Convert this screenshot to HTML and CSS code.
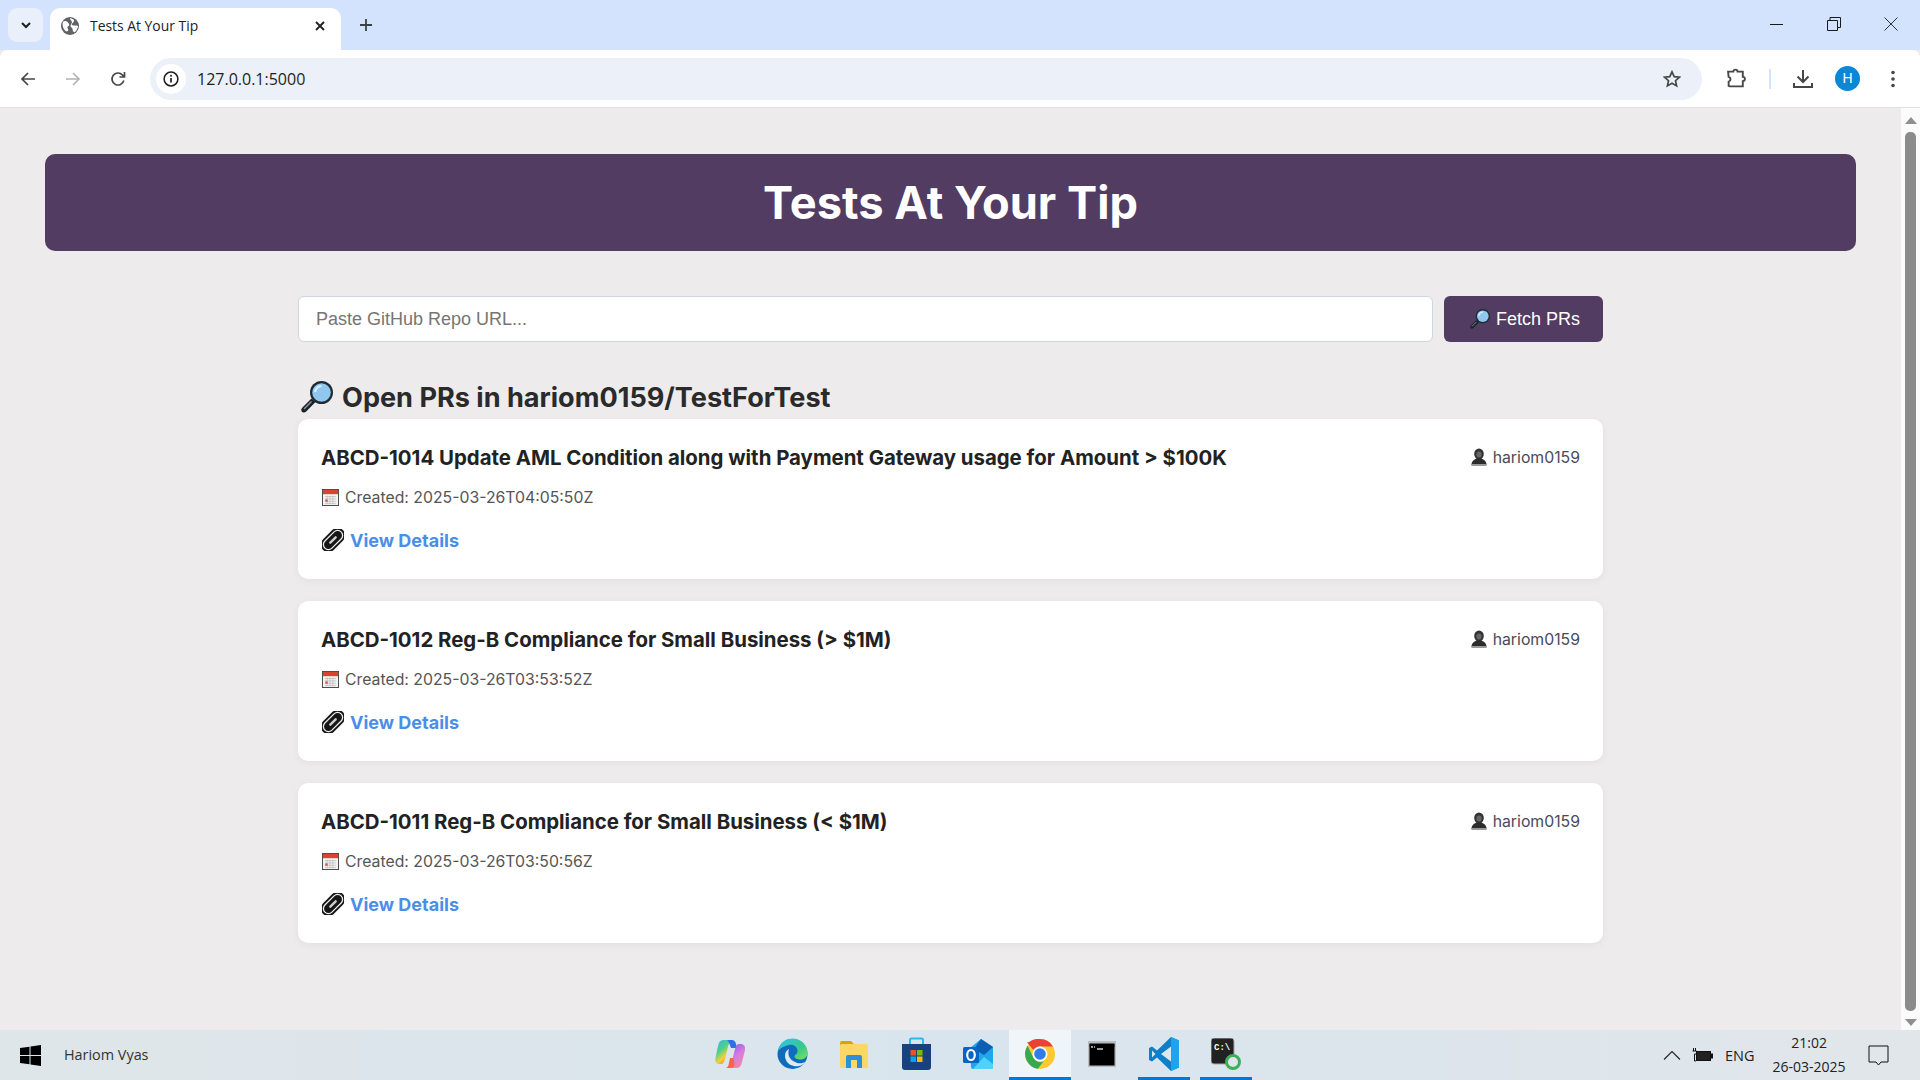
FILE: index.html
```html
<!DOCTYPE html>
<html lang="en">
<head>
    <meta charset="UTF-8">
    <meta name="viewport" content="width=device-width, initial-scale=1.0">
    <title>Tests At Your Tip</title>
    <link rel="stylesheet" href="styles.css">
</head>
<body>
    <svg class="defs" width="0" height="0" aria-hidden="true">
        <defs>
            <g id="e-search">
                <path d="M10.500 17.500 1.200 26.800c-1.700 1.800-.8 3.800.6 4.400 1 .5 2.400.3 3.400-.8l9.300-9.400z" fill="#1a2228"/>
                <path d="M3 28 10.500 20.500" stroke="#8a97a1" stroke-width="1.400" fill="none"/>
                <circle cx="20.500" cy="11.500" r="11.500" fill="#1f2b33"/>
                <circle cx="20.500" cy="11.500" r="9.300" fill="#8fc7ee"/>
                <path d="M14 11a7 7 0 0 1 6.500-6" stroke="#dcf0fc" stroke-width="2.200" fill="none"/>
            </g>
            <g id="e-cal">
                <rect x="0.500" y="0.500" width="17" height="17" fill="#f4f4f4" stroke="#444"/>
                <rect x="1" y="1" width="16" height="4.500" fill="#d9432f"/>
                <path d="M3 8h12M3 10.500h12M3 13h12M3 15.500h12M5.500 7v9M8.500 7v9M11.500 7v9" stroke="#bdbdbd" stroke-width=".8"/>
                <rect x="3.500" y="11" width="2.500" height="2.500" fill="#e0553f"/>
            </g>
            <g id="e-link">
                <g transform="rotate(-45 11 11)">
                    <rect x="-3" y="3.500" width="28" height="15" rx="7.500" fill="#161616"/>
                    <rect x="-.5" y="6" width="23" height="10" rx="5" fill="none" stroke="#ededed" stroke-width="1.300"/>
                    <rect x="6" y="9.800" width="10" height="2.400" rx="1.200" fill="#cfcfcf"/>
                </g>
            </g>
            <g id="e-user">
                <ellipse cx="8" cy="6" rx="4.800" ry="5.500" fill="#333"/>
                <path d="M.5 17c0-4 2.500-5.500 5-6.500h5c2.500 1 5 2.500 5 6.500z" fill="#2c2c2c"/>
                <ellipse cx="8" cy="6.500" rx="2.600" ry="3" fill="#666"/>
                <rect x=".5" y="16" width="15" height="2" fill="#9a9a9a"/>
            </g>
        </defs>
    </svg>

    <div class="tabstrip">
        <button class="tab-list">
            <svg width="12" height="8" viewBox="0 0 12 8"><path d="M2 2l4 4 4-4" fill="none" stroke="#1f1f1f" stroke-width="2"/></svg>
        </button>
        <div class="tab">
            <svg class="favicon" width="18" height="18" viewBox="0 0 18 18">
                <circle cx="9" cy="9" r="9" fill="#5f6368"/>
                <path d="M2 4.500C4 3.500 6 4 7 5.500S9 8 7.500 9 6 10.500 7 12s-.5 2.500-1.500 2.500S2.500 12 2 10 1.500 6 2 4.500zM9.500 1c1 1 3 1 3.500 2S12 6 11 6.500s0 2 1.500 2 4 0 4.500.5-1.500 5-3 6-2.500-1.500-2.500-3-2-1.500-2-3 1.500-3 1.500-4S8 2 9.500 1z" fill="#fff"/>
            </svg>
            <span class="tab-title">Tests At Your Tip</span>
            <svg class="tab-close" width="10" height="10" viewBox="0 0 10 10"><path d="M1 1l8 8M9 1L1 9" stroke="#1f1f1f" stroke-width="1.800"/></svg>
        </div>
        <svg class="new-tab" width="14" height="14" viewBox="0 0 14 14"><path d="M7 1v12M1 7h12" stroke="#3c4043" stroke-width="1.800"/></svg>
        <div class="win-btns">
            <svg width="14" height="14" viewBox="0 0 14 14"><path d="M0 7.500h13" stroke="#1a1a1a" stroke-width="1"/></svg>
            <svg width="14" height="14" viewBox="0 0 14 14"><path d="M.5 3.500h10v10H.5zM3 3.500V.5h10.500v10h-3" fill="none" stroke="#1a1a1a" stroke-width="1"/></svg>
            <svg width="14" height="14" viewBox="0 0 14 14"><path d="M.5.500l13 13M13.500.500l-13 13" stroke="#333" stroke-width="1"/></svg>
        </div>
    </div>

    <div class="toolbar">
        <div class="nav-btns">
            <svg width="16" height="16" viewBox="0 0 16 16"><path d="M15 8H2M8 2L2 8l6 6" fill="none" stroke="#474747" stroke-width="1.700"/></svg>
            <svg width="16" height="16" viewBox="0 0 16 16"><path d="M1 8h13M8 2l6 6-6 6" fill="none" stroke="#b3b3b3" stroke-width="1.700"/></svg>
            <svg width="16" height="16" viewBox="0 0 16 16"><path d="M13.800 9.500A6 6 0 1 1 12.300 3.800L14 5.500M14.500 1v5h-5" fill="none" stroke="#474747" stroke-width="1.700"/></svg>
        </div>
        <div class="omnibox">
            <span class="site-info">
                <svg width="16" height="16" viewBox="0 0 16 16"><circle cx="8" cy="8" r="6.900" fill="none" stroke="#1f1f1f" stroke-width="1.500"/><path d="M8 7v4.500" stroke="#1f1f1f" stroke-width="1.700"/><circle cx="8" cy="4.800" r="1" fill="#1f1f1f"/></svg>
            </span>
            <span class="url">127.0.0.1:5000</span>
            <svg class="star" width="18" height="18" viewBox="0 0 18 18"><path d="M9 1.800l2.200 4.800 5.200.6-3.900 3.500 1.100 5.200L9 13.300l-4.600 2.600 1.100-5.200L1.600 7.200l5.200-.6z" fill="none" stroke="#474747" stroke-width="1.700"/></svg>
        </div>
        <div class="tool-btns">
            <svg class="t-ext" width="21" height="21" viewBox="0 0 20 20"><path d="M2 3.500h5a2 2 0 0 1 4 0h5v5a2 2 0 0 1 0 4v5H3.500l-1-.5v-4a2.300 2.300 0 0 0 0-4.500z" fill="none" stroke="#474747" stroke-width="1.800"/></svg>
            <span class="t-sep"></span>
            <svg class="t-dl" width="20" height="20" viewBox="0 0 20 20"><path d="M10 1v11M4.500 7.500l5.500 5.500 5.500-5.500M1 14v4h18v-4" fill="none" stroke="#474747" stroke-width="2"/></svg>
            <span class="avatar">H</span>
            <svg class="t-menu" width="4" height="18" viewBox="0 0 4 18"><circle cx="2" cy="2.500" r="1.800" fill="#474747"/><circle cx="2" cy="9" r="1.800" fill="#474747"/><circle cx="2" cy="15.500" r="1.800" fill="#474747"/></svg>
        </div>
    </div>

    <div class="viewport">
        <div class="page">
            <header class="banner">
                <h1>Tests At Your Tip</h1>
            </header>
            <main class="content">
                <form class="repo-form">
                    <input class="repo-input" type="text" placeholder="Paste GitHub Repo URL...">
                    <button class="fetch-btn" type="button"><svg width="20" height="20" viewBox="0 0 32 32"><use href="#e-search"/></svg> Fetch PRs</button>
                </form>
                <h2 class="list-title"><svg width="32" height="32" viewBox="0 0 32 32"><use href="#e-search"/></svg> Open PRs in hariom0159/TestForTest</h2>

                <div class="pr-card">
                    <div class="pr-top">
                        <h3>ABCD-1014 Update AML Condition along with Payment Gateway usage for Amount &gt; $100K</h3>
                        <span class="pr-author"><svg width="16" height="18" viewBox="0 0 16 18"><use href="#e-user"/></svg> hariom0159</span>
                    </div>
                    <p class="pr-date"><svg width="17" height="17" viewBox="0 0 18 18"><use href="#e-cal"/></svg> Created: 2025-03-26T04:05:50Z</p>
                    <p class="pr-link"><svg width="22" height="22" viewBox="0 0 22 22"><use href="#e-link"/></svg> <a href="#">View Details</a></p>
                </div>

                <div class="pr-card">
                    <div class="pr-top">
                        <h3>ABCD-1012 Reg-B Compliance for Small Business (&gt; $1M)</h3>
                        <span class="pr-author"><svg width="16" height="18" viewBox="0 0 16 18"><use href="#e-user"/></svg> hariom0159</span>
                    </div>
                    <p class="pr-date"><svg width="17" height="17" viewBox="0 0 18 18"><use href="#e-cal"/></svg> Created: 2025-03-26T03:53:52Z</p>
                    <p class="pr-link"><svg width="22" height="22" viewBox="0 0 22 22"><use href="#e-link"/></svg> <a href="#">View Details</a></p>
                </div>

                <div class="pr-card">
                    <div class="pr-top">
                        <h3>ABCD-1011 Reg-B Compliance for Small Business (&lt; $1M)</h3>
                        <span class="pr-author"><svg width="16" height="18" viewBox="0 0 16 18"><use href="#e-user"/></svg> hariom0159</span>
                    </div>
                    <p class="pr-date"><svg width="17" height="17" viewBox="0 0 18 18"><use href="#e-cal"/></svg> Created: 2025-03-26T03:50:56Z</p>
                    <p class="pr-link"><svg width="22" height="22" viewBox="0 0 22 22"><use href="#e-link"/></svg> <a href="#">View Details</a></p>
                </div>
            </main>
        </div>
        <div class="scrollbar">
            <span class="arrow-up"></span>
            <span class="thumb"></span>
            <span class="arrow-down"></span>
        </div>
    </div>

    <div class="taskbar">
        <div class="task-left">
            <svg class="win-logo" width="21" height="21" viewBox="0 0 21 21"><path d="M0 3l9.500-1.300V10H0zM10.500 1.500 21 0v10H10.500zM0 11h9.500v8.300L0 18zM10.500 11H21v10l-10.500-1.500z" fill="#000"/></svg>
            <span class="user-name">Hariom Vyas</span>
        </div>
        <div class="task-apps">
            <span class="app">
                <svg width="30" height="30" viewBox="0 0 30 30">
                    <defs>
                        <linearGradient id="cp1" x1="0" y1="0" x2=".6" y2="1"><stop offset="0" stop-color="#35b6e8"/><stop offset=".45" stop-color="#4fd08a"/><stop offset=".75" stop-color="#f3d23a"/><stop offset="1" stop-color="#f4803c"/></linearGradient>
                        <linearGradient id="cp2" x1=".2" y1="0" x2=".8" y2="1"><stop offset="0" stop-color="#8a5cf0"/><stop offset=".5" stop-color="#d77be0"/><stop offset="1" stop-color="#f58ba0"/></linearGradient>
                    </defs>
                    <path d="M8 1h9c-2 1-3 3-4 7l-3 12c-.8 3-2 5-4 5H4c-3 0-4-2.500-3.500-6L3 7c.7-4 2.500-6 5-6z" fill="url(#cp1)"/>
                    <path d="M14 1h3c2 0 3.500 1.500 4 4l1 4h-6l-1.500-4C14 3 13 1.800 12 1.500z" fill="#2f6fe8"/>
                    <path d="M22 29h-9c2-1 3-3 4-7l3-12c.8-3 2-5 4-5h2c3 0 4.500 2.500 4 6l-3 12c-.7 4-2.500 6-5 6z" fill="url(#cp2)"/>
                    <path d="M9 19l6 0-1 5c-.5 3-1.500 4.500-3 5H16c1.500 0 3-1 3.500-3l-1-7z" fill="#f4654c"/>
                </svg>
            </span>
            <span class="app">
                <svg width="31" height="34" viewBox="0 0 31 34">
                    <defs><linearGradient id="ed1" x1="0" y1="0" x2="1" y2="1"><stop offset="0" stop-color="#35c1f1"/><stop offset=".6" stop-color="#36c98d"/><stop offset="1" stop-color="#7fe05c"/></linearGradient></defs>
                    <circle cx="15.500" cy="17" r="15" fill="#0f6cbd"/>
                    <path d="M1 14C3 5 9 1.500 15.500 1.500 24 1.500 30.500 8 30.500 16c0 4-3 6.500-7 6.500-3 0-6-1-6-3 0-2 3-2 3-5.500 0-4-4-7-8.500-6C7 9 3 11 1 14z" fill="url(#ed1)"/>
                    <path d="M12 12c-4 2-5 7-3 11 2 5 8 7 13 6 3-.5 5-2 6-4-3 1.500-7 2-10 0-5-2-8-7-6-13z" fill="#dcebf3"/>
                </svg>
            </span>
            <span class="app">
                <svg width="28" height="28" viewBox="0 0 28 28">
                    <path d="M0 3a2 2 0 0 1 2-2h9l3 3v5H0z" fill="#e0a100"/>
                    <rect x="0" y="4" width="28" height="24" rx="2" fill="#fcd768"/>
                    <path d="M6 28V17a2 2 0 0 1 2-2h12a2 2 0 0 1 2 2v11h-5v-8h-6v8z" fill="#2f8fd8"/>
                </svg>
            </span>
            <span class="app">
                <svg width="29" height="33" viewBox="0 0 29 33">
                    <path d="M8 8V3a1.500 1.500 0 0 1 1.500-1.500h10A1.500 1.500 0 0 1 21 3v5" fill="none" stroke="#2fb7ea" stroke-width="2"/>
                    <path d="M0 7h29v23a3 3 0 0 1-3 3H3a3 3 0 0 1-3-3z" fill="#17427c"/>
                    <rect x="8.500" y="13" width="5.500" height="5.500" fill="#f25022"/>
                    <rect x="15" y="13" width="5.500" height="5.500" fill="#7fba00"/>
                    <rect x="8.500" y="19.500" width="5.500" height="5.500" fill="#00a4ef"/>
                    <rect x="15" y="19.500" width="5.500" height="5.500" fill="#ffb900"/>
                </svg>
            </span>
            <span class="app">
                <svg width="30" height="30" viewBox="0 0 30 30">
                    <path d="M7 9l11-9 12 8v20a2 2 0 0 1-2 2H10a2 2 0 0 1-2-2z" fill="#1ea7ea"/>
                    <path d="M18 0l12 8-9 8-10-6z" fill="#0a5fb4"/>
                    <path d="M10 30l11-12 9 7v3a2 2 0 0 1-2 2z" fill="#4fd4f7"/>
                    <rect x="0" y="8" width="16" height="16" rx="1.500" fill="#0a64c4"/>
                    <ellipse cx="8" cy="16" rx="3.800" ry="5" fill="none" stroke="#fff" stroke-width="2.200"/>
                </svg>
            </span>
            <span class="app app-active">
                <svg width="30" height="30" viewBox="0 0 30 30">
                    <circle cx="15" cy="15" r="15" fill="#fcc934"/>
                    <path d="M15 0a15 15 0 0 1 13 7.500H15A7.500 7.500 0 0 0 8.500 11L2 3.500 4 3A15 15 0 0 1 15 0z" fill="#ea4335"/>
                    <path d="M2.500 6.800A15 15 0 0 0 12.800 29.800l6-7.500A7.500 7.500 0 0 1 8.500 18.700z" fill="#34a853"/>
                    <circle cx="15" cy="15" r="7.500" fill="#fff"/>
                    <circle cx="15" cy="15" r="5.800" fill="#2f7de8"/>
                </svg>
            </span>
            <span class="app">
                <svg width="28" height="26" viewBox="0 0 28 26">
                    <rect width="28" height="26" fill="#b9bdc0"/>
                    <rect x="1.500" y="2" width="25" height="4" fill="#5a5a5a"/>
                    <rect x="1.500" y="3" width="25" height="21.500" fill="#000"/>
                    <path d="M3 6h2M6 6h1M9 8h6" stroke="#ccc" stroke-width="1.500"/>
                </svg>
            </span>
            <span class="app">
                <svg width="30" height="34" viewBox="0 0 30 34">
                    <path d="M22 0l8 3.500v27L22 34 8 20.500 3 24.500 0 23V11l3-1.500 5 4z" fill="#0e7fc9"/>
                    <path d="M22 0l8 3.500v27L22 34z" fill="#1fa3ee"/>
                    <path d="M22 9.500 12 17l10 7.500z" fill="#dce8ee"/>
                    <path d="M3 13.500v7l3.500-3.500z" fill="#dce8ee"/>
                </svg>
            </span>
            <span class="app">
                <svg width="30" height="32" viewBox="0 0 30 32">
                    <rect width="23" height="26" rx="3" fill="#222" stroke="#aaa"/>
                    <text x="3" y="12" class="cmd-label">C:\</text>
                    <circle cx="22" cy="24" r="6.500" fill="#dfe6ea" stroke="#3fae5a" stroke-width="3"/>
                </svg>
            </span>
        </div>
        <div class="task-tray">
            <svg width="18" height="10" viewBox="0 0 18 10"><path d="M1 9.500l8-8 8 8" fill="none" stroke="#222" stroke-width="1.100"/></svg>
            <svg class="battery" width="21" height="14" viewBox="0 0 21 14"><path d="M1.500 0v3M3.500 0v3M.5 3h4v3H2.500v7H4" fill="none" stroke="#111"/><rect x="4.500" y="3.500" width="14" height="9" fill="#222" stroke="#111"/><rect x="19" y="5.500" width="2" height="5" fill="#111"/></svg>
            <span class="lang">ENG</span>
            <div class="clock"><span>21:02</span><span>26-03-2025</span></div>
            <svg class="notif" width="21" height="21" viewBox="0 0 21 21"><path d="M1 1h19v16h-7l-2.500 3L8 17H1z" fill="none" stroke="#111" stroke-width="1"/></svg>
        </div>
    </div>
</body>
</html>
```

FILE: styles.css
```css
* {
    box-sizing: border-box;
}
html, body {
    margin: 0;
    height: 100%;
    overflow: hidden;
}
body {
    display: flex;
    flex-direction: column;
    height: 1080px;
    font-family: "Inter", "Liberation Sans", sans-serif;
    background: #edebec;
}
.defs {
    display: block;
    height: 0;
}

/* browser chrome */
.tabstrip {
    height: 50px;
    flex: none;
    background: #d3e3fd;
    display: flex;
    align-items: flex-start;
    padding: 8px 0 0 8px;
}
.tab-list {
    width: 35px;
    height: 34px;
    border: 0;
    border-radius: 9px;
    background: #e9f0fc;
    display: flex;
    align-items: center;
    justify-content: center;
    padding: 0;
}
.tab {
    width: 291px;
    height: 42px;
    margin-left: 7px;
    background: #fff;
    border-radius: 10px 10px 0 0;
    display: flex;
    align-items: center;
    padding: 0 16px 7px 11px;
}
.favicon {
    flex: none;
}
.tab-title {
    margin-left: 11px;
    font: 13.900px "Open Sans", sans-serif;
    color: #222;
    flex: 1;
}
.new-tab {
    margin: 10px 0 0 18px;
}
.win-btns {
    margin-left: auto;
    display: flex;
    gap: 43px;
    padding: 10px 22px 0 0;
    margin-top: -1px;
}
.toolbar {
    height: 58px;
    flex: none;
    background: #fff;
    border-bottom: 1px solid #dfdfdf;
    border-radius: 8px 8px 0 0;
    display: flex;
    align-items: center;
}
.nav-btns {
    display: flex;
    gap: 29px;
    width: 150px;
    padding-left: 20px;
}
.omnibox {
    width: 1552px;
    height: 42px;
    border-radius: 21px;
    background: #ebf0f9;
    display: flex;
    align-items: center;
    padding: 0 21px 0 6px;
}
.site-info {
    width: 30px;
    height: 30px;
    border-radius: 50%;
    background: #fff;
    display: flex;
    align-items: center;
    justify-content: center;
}
.url {
    margin-left: 11px;
    font: 16px "Open Sans", sans-serif;
    color: #1f1f1f;
}
.star {
    margin-left: auto;
}
.tool-btns {
    flex: 1;
    display: flex;
    align-items: center;
    padding-left: 24px;
}
.t-sep {
    width: 2px;
    height: 20px;
    background: #d3e3fd;
    margin-left: 22px;
}
.t-dl {
    margin-left: 22px;
}
.avatar {
    width: 25px;
    height: 25px;
    border-radius: 50%;
    background: #0b87d6;
    color: #fff;
    font: 14px/25px "Liberation Sans", sans-serif;
    text-align: center;
    margin-left: 22px;
}
.t-menu {
    margin-left: 31px;
}

/* page */
.viewport {
    height: 922px;
    flex: none;
    display: flex;
}
.page {
    flex: 1;
    padding: 46px 45px 0;
    background: #edebec;
    color: #222;
}
.scrollbar {
    width: 19px;
    background: #fbfbfb;
    display: flex;
    flex-direction: column;
    align-items: center;
    padding: 9px 0 4px;
}
.arrow-up {
    width: 0;
    height: 0;
    border: 6.500px solid transparent;
    border-top: 0;
    border-bottom: 7px solid #8f8f8f;
}
.thumb {
    width: 11px;
    flex: 1;
    background: #8b8b8b;
    border-radius: 5px;
    margin: 8px 0;
}
.arrow-down {
    width: 0;
    height: 0;
    border: 6.500px solid transparent;
    border-bottom: 0;
    border-top: 7px solid #8f8f8f;
}
.banner {
    height: 97px;
    background: #523c62;
    border-radius: 10px;
    display: flex;
    align-items: center;
    justify-content: center;
}
.banner h1 {
    margin: 0;
    font-size: 45.200px;
    font-weight: 700;
    color: #fff;
}
.content {
    width: 1305px;
    margin: 45px auto 0;
}
.repo-form {
    display: flex;
    gap: 11px;
}
.repo-input {
    flex: 1;
    height: 46px;
    border: 1px solid #ccd6e2;
    border-radius: 6px;
    background: #fff;
    padding: 0 17px;
    font: 18px "Liberation Sans", sans-serif;
}
.repo-input::placeholder {
    color: #757575;
}
.fetch-btn {
    width: 159px;
    height: 46px;
    border: 0;
    border-radius: 6px;
    background: #523c62;
    color: #fff;
    font: 18px "Liberation Sans", sans-serif;
    display: flex;
    align-items: center;
    justify-content: center;
    gap: 6px;
    padding: 0 0 0 3px;
}
.list-title {
    margin: 39px 0 6px;
    height: 32px;
    display: flex;
    align-items: center;
    gap: 9px;
    padding-left: 3px;
    font-size: 27.100px;
    font-weight: 700;
    color: #2a2a2a;
}
.pr-card {
    height: 160px;
    background: #fff;
    border-radius: 10px;
    box-shadow: 0 2px 8px rgba(0, 0, 0, .05);
    padding: 23px 23px 0;
    margin-bottom: 22px;
}
.pr-top {
    display: flex;
    justify-content: space-between;
    align-items: center;
    height: 30px;
}
.pr-top h3 {
    margin: 0;
    font-size: 20.400px;
    font-weight: 700;
    color: #222;
}
.pr-author {
    display: flex;
    align-items: center;
    gap: 6px;
    font-size: 15.800px;
    color: #4a4a5a;
}
.pr-date {
    margin: 15px 0 0;
    height: 20px;
    display: flex;
    align-items: center;
    gap: 6px;
    padding-left: 1px;
    font-size: 15.800px;
    color: #555;
}
.pr-link {
    margin: 21px 0 0;
    display: flex;
    align-items: center;
    gap: 6px;
    padding-left: 1px;
    height: 24px;
}
.pr-link a {
    font-size: 18px;
    font-weight: 700;
    color: #4a8fe7;
    text-decoration: none;
}

/* taskbar */
.taskbar {
    height: 50px;
    flex: none;
    background: linear-gradient(90deg, #dfe6e9, #d9e5ee 50%, #e1e6ea);
    display: flex;
    align-items: stretch;
}
.task-left {
    width: 699px;
    display: flex;
    align-items: center;
    padding-left: 20px;
}
.user-name {
    margin: -2px 0 0 23px;
    font: 14.400px "Open Sans", sans-serif;
    color: #333;
}
.task-apps {
    display: flex;
}
.app {
    width: 62px;
    display: flex;
    align-items: center;
    justify-content: center;
    border-bottom: 3px solid transparent;
}
.app:nth-child(n+8) {
    border-image: linear-gradient(90deg, transparent 10%, #0078d4 10%, #0078d4 90%, transparent 90%) 1;
}
.app-active {
    background: #f0f5f9;
    border-bottom-color: #0078d4;
}
.cmd-label {
    font: 700 9px "Liberation Mono", monospace;
    fill: #fff;
}
.task-tray {
    flex: 1;
    display: flex;
    align-items: center;
    padding-left: 406px;
    color: #222;
}
.battery {
    margin-left: 11px;
}
.lang {
    margin-left: 12px;
    font: 14.500px "Open Sans", sans-serif;
}
.clock {
    display: flex;
    flex-direction: column;
    align-items: center;
    margin-left: 18px;
    font: 14px/24px "Open Sans", sans-serif;
}
.notif {
    margin-left: 22px;
}
```
